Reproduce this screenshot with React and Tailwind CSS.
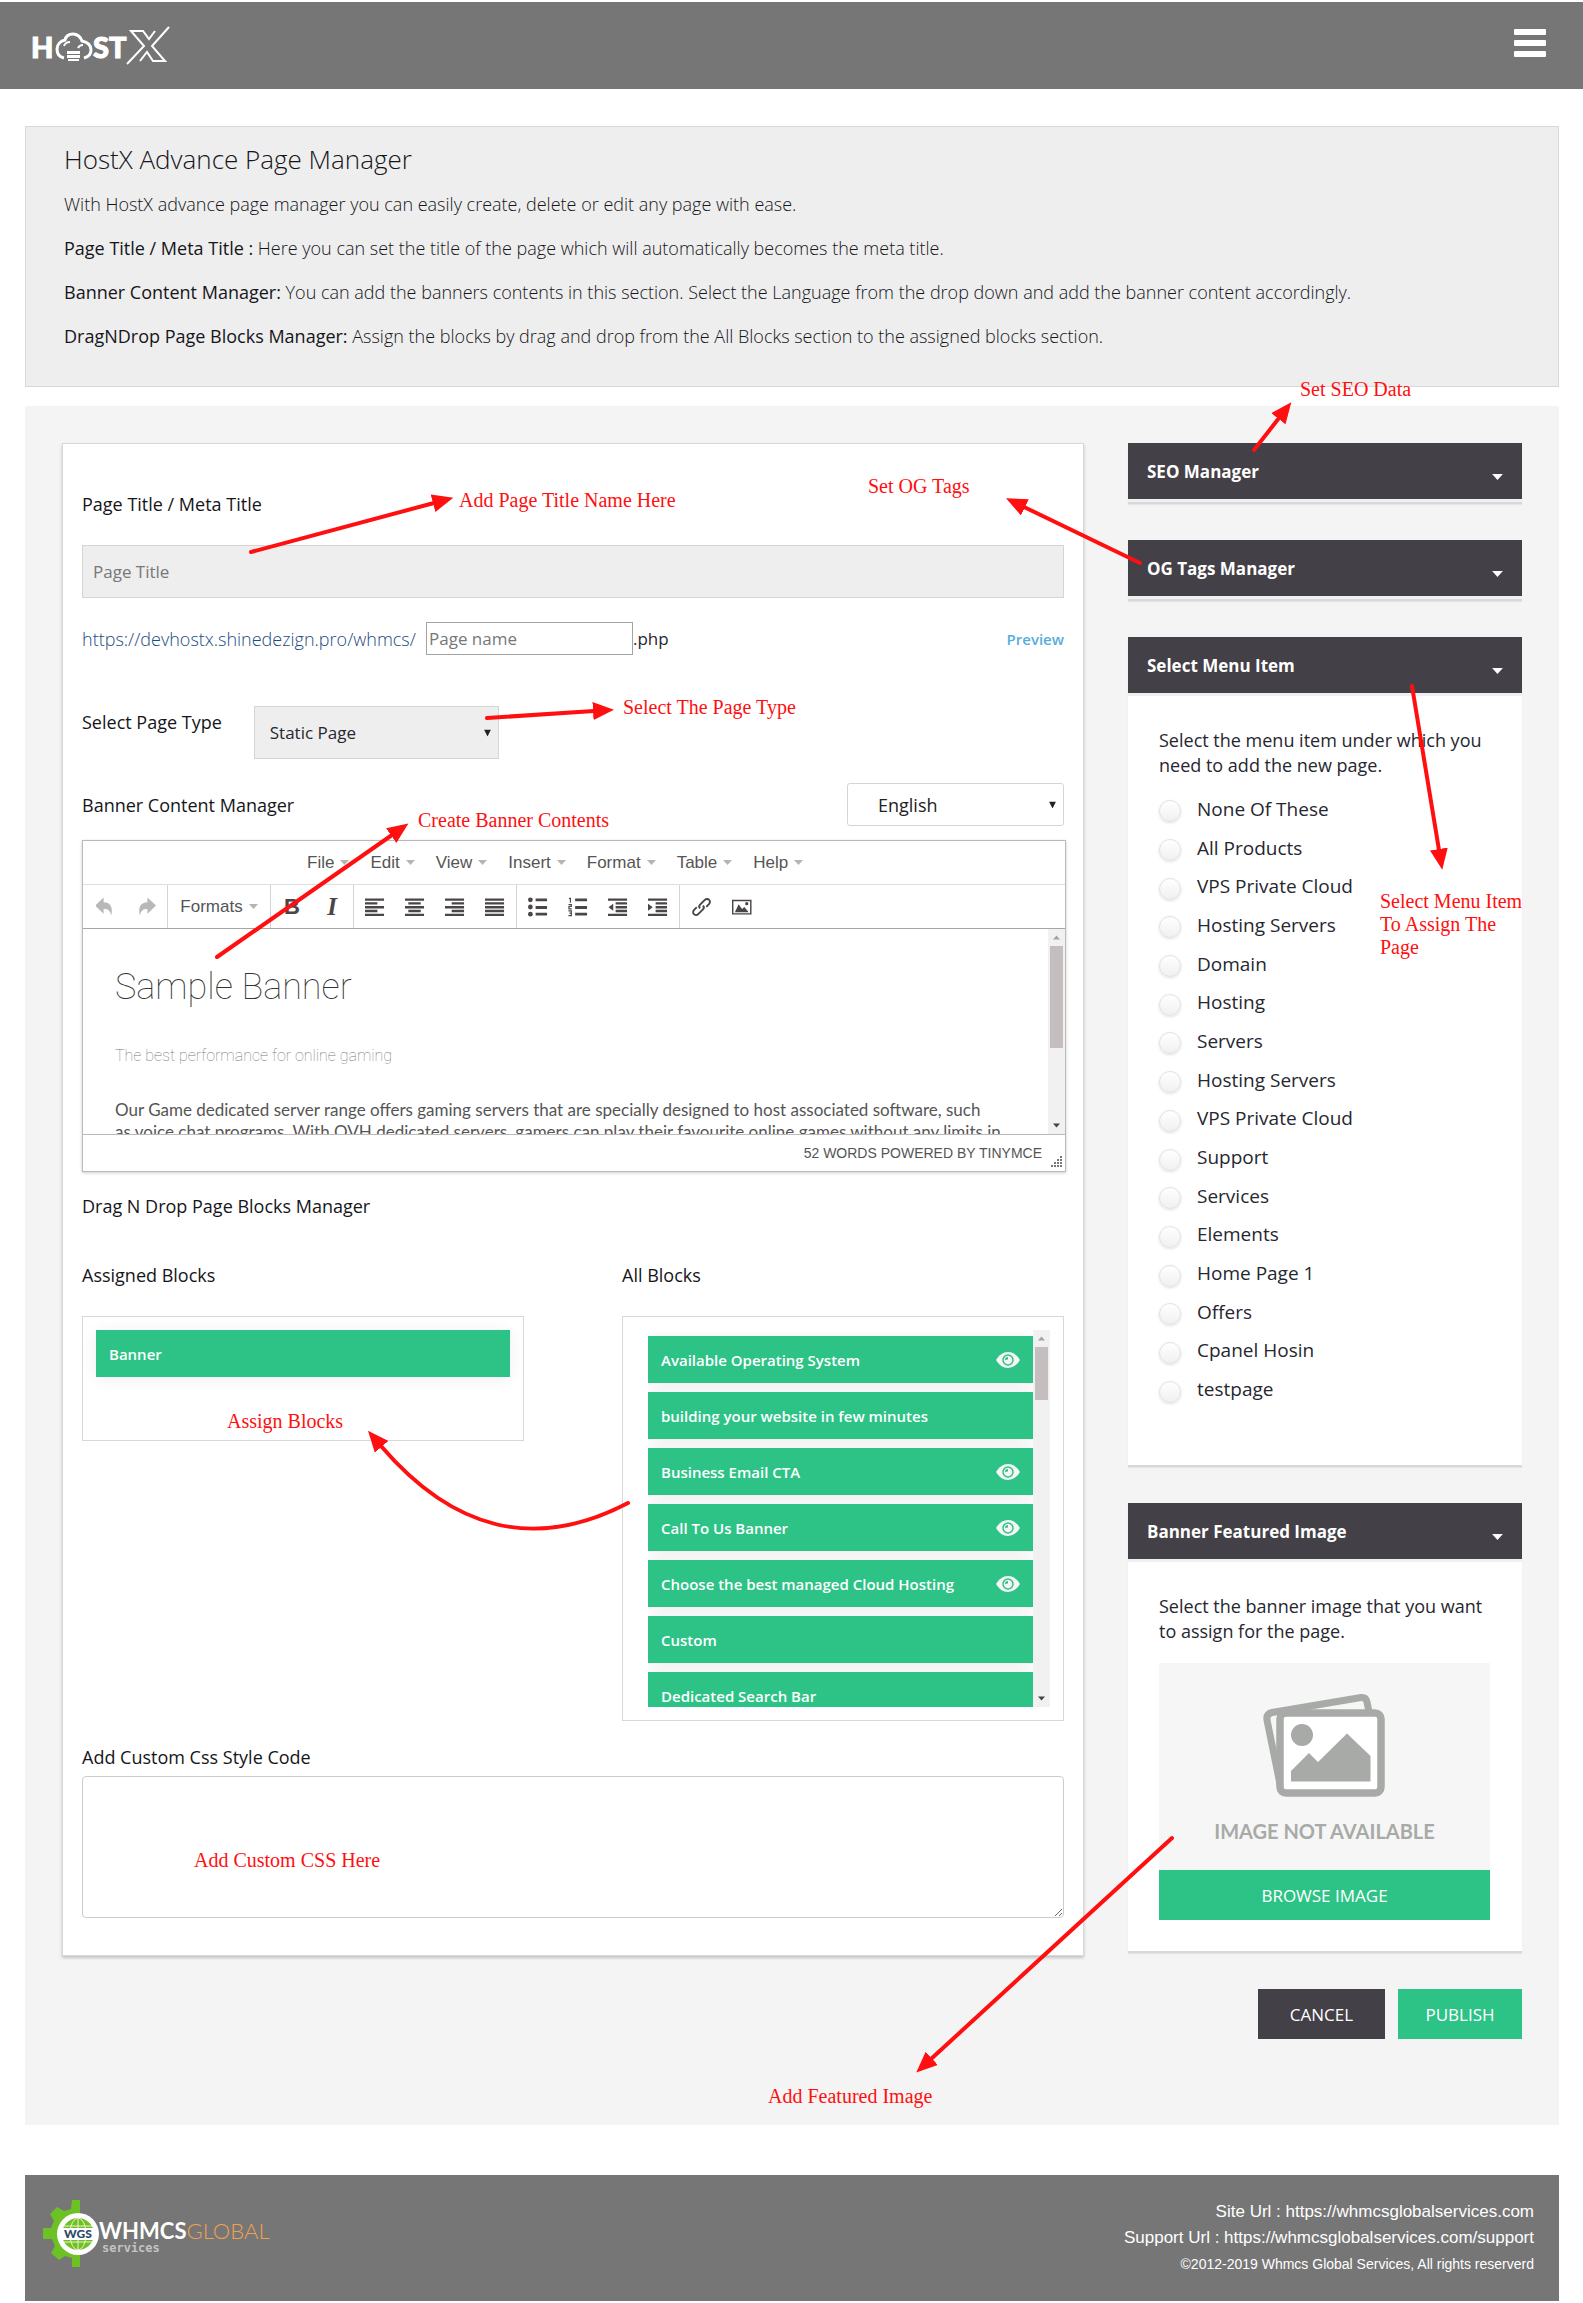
import { useState } from 'react'

const menuItems = [
  'None Of These', 'All Products', 'VPS Private Cloud', 'Hosting Servers',
  'Domain', 'Hosting', 'Servers', 'Hosting Servers', 'VPS Private Cloud',
  'Support', 'Services', 'Elements', 'Home Page 1', 'Offers', 'Cpanel Hosin', 'testpage',
]

const allBlocks = [
  { name: 'Available Operating System', preview: true },
  { name: 'building your website in few minutes', preview: false },
  { name: 'Business Email CTA', preview: true },
  { name: 'Call To Us Banner', preview: true },
  { name: 'Choose the best managed Cloud Hosting', preview: true },
  { name: 'Custom', preview: false },
  { name: 'Dedicated Search Bar', preview: false },
]

const editorMenus = ['File', 'Edit', 'View', 'Insert', 'Format', 'Table', 'Help']

function HostXLogo() {
  return (
    <svg width="140" height="40" viewBox="32 26 140 40" fill="none" role="img" aria-label="HostX">
      <g fill="#fff" stroke="#fff" strokeWidth="1" fontFamily="Lato, sans-serif" fontWeight="900" fontSize="29">
        <text x="31" y="58">H</text>
        <text x="93" y="58">ST</text>
      </g>
      <path d="M64 58C59 57 57 53 57 49c0-5 4-8 8-9 1-4 4-6 8-6s8 3 9 7c5 1 9 4 9 9 0 4-3 7-7 8" stroke="#fff" strokeWidth="3" />
      <path d="M64 46c1-3 3-4 6-4M78 48c1-2 3-3 5-3" stroke="#fff" strokeWidth="2" />
      <path d="M67 51h13v3H67zM67 55h13v3H67zM68 59h11v2H68z" fill="#fff" />
      <path d="M169 27 152 46 165 61h-12l-6-9-7 9M127 64l17-18-13-15h12l6 8 6-8" stroke="#fff" strokeWidth="2" />
    </svg>
  )
}

function GearLogo() {
  return (
    <svg width="56" height="70" viewBox="0 0 56 70" aria-hidden="true">
      <path
        fill="#6cc224"
        d="M29 1h8v67h-8v-9l-7-2-6 4-8-7 4-7-3-7H0V29h8l3-7-4-7 7-7 7 4 7-2z"
      />
      <circle cx="35" cy="35" r="21" fill="#fff" />
      <circle cx="35" cy="35" r="16" fill="#6cc224" />
      <g fill="none" stroke="#f5efcf" strokeWidth="1">
        <path d="M35 19v32M21 27h28M21 43h28" />
        <ellipse cx="35" cy="35" rx="8" ry="16" />
      </g>
      <path d="M18 29h34v12H18z" fill="#fff" />
      <text x="35" y="39" textAnchor="middle" fontFamily="Lato, sans-serif" fontWeight="900" fontSize="12" fill="#2b4a66">WGS</text>
    </svg>
  )
}

function Caret({ className }) {
  return (
    <svg width="9" height="5" viewBox="0 0 9 5" className={className} fill="currentColor" aria-hidden="true">
      <path d="M0 0h9L4.500 5z" />
    </svg>
  )
}

function SelectArrow() {
  return (
    <svg width="7" height="7" viewBox="0 0 7 7" fill="#222" className="pointer-events-none absolute top-1/2 right-2 -translate-y-1/2" aria-hidden="true">
      <path d="M0 0h7L3.500 7z" />
    </svg>
  )
}

function Eye() {
  return (
    <svg width="24" height="16" viewBox="0 0 24 16" aria-hidden="true">
      <path d="M0 8C3 3 7 0 12 0s9 3 12 8c-3 5-7 8-12 8S3 13 0 8z" fill="#f4f6f3" />
      <circle cx="12" cy="8" r="5" fill="none" stroke="#2dc387" strokeWidth="1.500" />
      <path d="M9 8a3 3 0 0 1 3-3v2.500z" fill="#2dc387" />
    </svg>
  )
}

// editor toolbar glyphs, all drawn on a 20x20 grid
const glyphs = {
  left: <path d="M0 1h20v2.500H0zM0 5h13v2.500H0zM0 9h20v2.500H0zM0 13h13v2.500H0zM0 17h20v2.500H0z" />,
  center: <path d="M0 1h20v2.500H0zM3.500 5h13v2.500h-13zM0 9h20v2.500H0zM3.500 13h13v2.500h-13zM0 17h20v2.500H0z" />,
  right: <path d="M0 1h20v2.500H0zM7 5h13v2.500H7zM0 9h20v2.500H0zM7 13h13v2.500H7zM0 17h20v2.500H0z" />,
  justify: <path d="M0 1h20v2.500H0zM0 5h20v2.500H0zM0 9h20v2.500H0zM0 13h20v2.500H0zM0 17h20v2.500H0z" />,
  bullets: (
    <>
      <circle cx="2.500" cy="2.500" r="2.500" /><circle cx="2.500" cy="10" r="2.500" /><circle cx="2.500" cy="17.500" r="2.500" />
      <path d="M8 1h12v3H8zM8 9h12v3H8zM8 16h12v3H8z" />
    </>
  ),
  numbers: (
    <>
      <path d="M7.500 1H20v3H7.500zM7.500 9H20v3H7.500zM7.500 16H20v3H7.500z" />
      <path d="M1 1h1.500v4.500M.5 7.500h3v2h-2.500v2.500h3M.5 14h3v2.500h-2 2V19h-3" fill="none" stroke="currentColor" strokeWidth="1.200" />
    </>
  ),
  outdent: <path d="M0 1h20v2.500H0zM8 5h12v2.500H8zM8 9h12v2.500H8zM8 13h12v2.500H8zM0 17h20v2.500H0zM5.500 6.500v7.500L.5 10.200z" />,
  indent: <path d="M0 1h20v2.500H0zM8 5h12v2.500H8zM8 9h12v2.500H8zM8 13h12v2.500H8zM0 17h20v2.500H0zM0 6.500v7.500l5-3.800z" />,
  link: (
    <g fill="none" stroke="currentColor" strokeWidth="2">
      <path d="M8.500 11.500c-1.500-1.500-1-3 0-4l5-5c1.500-1.500 3.500-1 4.500 0s1.200 3 0 4.300l-3 3" />
      <path d="M11.500 8.500c1.500 1.500 1 3 0 4l-5 5c-1.500 1.500-3.500 1-4.500 0s-1.200-3 0-4.300l3-3" />
    </g>
  ),
  image: (
    <>
      <path d="M0 2.500h20.500v15.500H0zM1.500 4v12.500H19V4z" fillRule="evenodd" />
      <path d="M3 15.500 7 7l3.500 5 2.500-2 4.500 5.500z" /><circle cx="15.500" cy="6.500" r="1.700" />
    </>
  ),
  undo: <path d="M8 0v5c7 0 10 5 8 14-1-5-3-7-8-7v5L-1 8.500z" />,
  redo: <path d="M12 0v5c-7 0-10 5-8 14 1-5 3-7 8-7v5l9-8.500z" />,
}

function ToolButton({ name, label, faded }) {
  return (
    <button type="button" aria-label={label} className={faded ? 'flex w-10 items-center justify-center text-[#b9b7b7]' : 'flex w-10 items-center justify-center text-[#4a4546]'}>
      <svg width="20" height="20" viewBox="0 0 21 20" fill="currentColor">{glyphs[name]}</svg>
    </button>
  )
}

function ScrollBar({ thumb }) {
  return (
    <div className="flex w-[17px] shrink-0 flex-col items-center bg-[#f1f1f1]" aria-hidden="true">
      <div className="flex h-[17px] items-center">
        <Caret className="w-[7px] rotate-180 text-[#a3a3a3]" />
      </div>
      <div className={thumb} />
      <div className="mt-auto flex h-[17px] items-center">
        <Caret className="w-[7px] text-[#444]" />
      </div>
    </div>
  )
}

function Block({ name, preview }) {
  return (
    <li className="flex h-[47px] shrink-0 items-center justify-between bg-[#2dc387] px-[13px] text-[15px] font-semibold text-white shadow-[0_2px_15px_rgba(0,0,0,0.07)]">
      {name}
      {preview && <button type="button" aria-label={`Preview ${name}`}><Eye /></button>}
    </li>
  )
}

function Panel({ title, children }) {
  return (
    <section className="border-b-2 border-[#d8d8d8] shadow-[0_1px_1px_rgba(0,0,0,0.06)]">
      <button type="button" className="flex h-14 w-full items-center justify-between bg-[#434047] px-[19px] text-left text-[17px] font-bold text-white">
        {title}
        <Caret className="mt-3 h-[6px] w-[11px]" />
      </button>
      <div className="h-[3px] bg-[#f0f0f0]" />
      {children && <div className="bg-white pt-8 pr-8 pl-[31px]">{children}</div>}
    </section>
  )
}

const notes = [
  { text: 'Set SEO Data', box: 'left-[1300px] top-[378px]', arrow: 'M1254 450 1279 418' },
  { text: 'Set OG Tags', box: 'left-[868px] top-[475px]', arrow: 'M1140 563 1024 507' },
  { text: 'Add Page Title Name Here', box: 'left-[459px] top-[489px]', arrow: 'M251 552 434 503' },
  { text: 'Select The Page Type', box: 'left-[623px] top-[696px]', arrow: 'M487 718 594 711' },
  { text: 'Create Banner Contents', box: 'left-[418px] top-[809px]', arrow: 'M217 957 392 835' },
  { text: 'Select Menu Item To Assign The Page', box: 'left-[1380px] top-[890px] w-[150px]', arrow: 'M1412 686 1439 850' },
  { text: 'Assign Blocks', box: 'left-[227px] top-[1410px]', arrow: 'M628 1503C534 1552 453 1530 381 1446' },
  { text: 'Add Custom CSS Here', box: 'left-[194px] top-[1849px]' },
  { text: 'Add Featured Image', box: 'left-[768px] top-[2085px]', arrow: 'M1172 1838 931 2059' },
]

function Notes() {
  return (
    <div className="pointer-events-none absolute inset-0 font-['Liberation_Serif',serif] text-[20px] leading-[23px] text-[#ff0f0f]">
      <svg className="absolute inset-0 h-full w-full" fill="none" stroke="#ff0f0f" strokeWidth="4" strokeLinecap="round">
        <defs>
          <marker id="head" markerUnits="userSpaceOnUse" markerWidth="22" markerHeight="18" refX="1" refY="9" orient="auto">
            <path d="M0 0 21 9 0 18z" fill="#ff0f0f" stroke="none" />
          </marker>
        </defs>
        {notes.filter((n) => n.arrow).map((n) => (
          <path key={n.text} d={n.arrow} markerEnd="url(#head)" />
        ))}
      </svg>
      {notes.map((n) => (
        <p key={n.text} className={`absolute ${n.box}`}>{n.text}</p>
      ))}
    </div>
  )
}

function Editor() {
  return (
    <div className="-mr-[2px] mt-[14px] border border-[#bdb9b9] font-['Liberation_Sans',sans-serif] text-[#555] shadow-[0_1px_3px_rgba(0,0,0,0.2)]">
      <div className="flex h-11 items-center gap-[21px] border-b border-[#d8e0e2] pl-[224px] text-[17px]">
        {editorMenus.map((m) => (
          <button key={m} type="button" className="flex items-center gap-[6px]">
            {m}
            <Caret className="text-[#b5b5b5]" />
          </button>
        ))}
      </div>
      <div className="flex h-11 border-b border-[#a8a5a5]">
        <div className="flex border-r border-[#d4d4d4] pr-px pl-[3px]">
          <ToolButton name="undo" label="Undo" faded />
          <ToolButton name="redo" label="Redo" faded />
        </div>
        <button type="button" className="flex w-[103px] items-center justify-center gap-[6px] border-r border-[#d4d4d4] text-[17px]">
          Formats
          <Caret className="text-[#b5b5b5]" />
        </button>
        <div className="flex border-r border-[#d4d4d4] px-px font-['Liberation_Serif',serif] text-[25px] font-bold text-[#4a4546]">
          <button type="button" className="w-10 font-['Liberation_Sans',sans-serif] text-[22px]" aria-label="Bold">B</button>
          <button type="button" className="w-10 italic" aria-label="Italic">I</button>
        </div>
        <div className="flex border-r border-[#d4d4d4] px-px">
          <ToolButton name="left" label="Align left" />
          <ToolButton name="center" label="Align center" />
          <ToolButton name="right" label="Align right" />
          <ToolButton name="justify" label="Justify" />
        </div>
        <div className="flex border-r border-[#d4d4d4] px-px">
          <ToolButton name="bullets" label="Bullet list" />
          <ToolButton name="numbers" label="Numbered list" />
          <ToolButton name="outdent" label="Decrease indent" />
          <ToolButton name="indent" label="Increase indent" />
        </div>
        <div className="flex px-[2px]">
          <ToolButton name="link" label="Insert link" />
          <ToolButton name="image" label="Insert image" />
        </div>
      </div>
      <div className="flex h-[205px]">
        <div className="flex-1 overflow-hidden pt-[34px] pl-8">
          <h2 className="font-['Roboto',sans-serif] text-[36px] leading-[48px] font-thin text-[#333]">Sample Banner</h2>
          <h3 className="mt-[33px] font-['Roboto',sans-serif] text-base leading-6 font-thin text-[#777]">The best performance for online gaming</h3>
          <p className="mt-[31px] font-['Lato',sans-serif] text-[17px] leading-[22px] whitespace-nowrap text-[#555]">
            Our Game dedicated server range offers gaming servers that are specially designed to host associated software, such
            <br />
            as voice chat programs. With OVH dedicated servers, gamers can play their favourite online games without any limits in
          </p>
        </div>
        <ScrollBar thumb="h-[102px] w-[13px] bg-[#c4bfbe]" />
      </div>
      <div className="flex h-[37px] items-center justify-end gap-2 border-t border-[#bdb9b9] text-sm">
        52 WORDS POWERED BY TINYMCE
        <svg width="12" height="12" viewBox="0 0 12 12" fill="#777" className="mt-auto mr-[3px] mb-[3px]" aria-hidden="true">
          <path d="M10 0h2v2h-2zM10 3h2v2h-2zM7 3h2v2H7zM10 6h2v2h-2zM7 6h2v2H7zM4 6h2v2H4zM10 9h2v2h-2zM7 9h2v2H7zM4 9h2v2H4zM1 9h2v2H1z" />
        </svg>
      </div>
    </div>
  )
}

export default function App() {
  const [selected, setSelected] = useState(null)

  return (
    <div className="relative bg-white pt-[2px] pb-[2px] font-['Open_Sans',sans-serif] text-[#26272f]">
      {/* Header */}
      <header className="flex h-[87px] items-start justify-between bg-[#767676] pl-8 pr-[37px]">
        <a href="#home" className="pt-6"><HostXLogo /></a>
        <button type="button" aria-label="Open menu" className="mt-[27px] flex flex-col gap-[5px]">
          <span className="h-[6px] w-8 rounded-[1px] bg-white" />
          <span className="h-[6px] w-8 rounded-[1px] bg-white" />
          <span className="h-[6px] w-8 rounded-[1px] bg-white" />
        </button>
      </header>

      <main className="pt-[37px] pr-6 pl-[25px]">
        {/* Intro */}
        <section className="space-y-5 border border-[#d8d8d8] bg-[#eee] px-[38px] pt-[19px] pb-[38px] text-[18px] leading-6 font-light text-[#15151a]">
          <h1 className="text-[26px] leading-[26px]">HostX Advance Page Manager</h1>
          <p>With HostX advance page manager you can easily create, delete or edit any page with ease.</p>
          <p><b className="font-medium">Page Title / Meta Title :</b> Here you can set the title of the page which will automatically becomes the meta title.</p>
          <p><b className="font-medium">Banner Content Manager:</b> You can add the banners contents in this section. Select the Language from the drop down and add the banner content accordingly.</p>
          <p><b className="font-medium">DragNDrop Page Blocks Manager:</b> Assign the blocks by drag and drop from the All Blocks section to the assigned blocks section.</p>
        </section>

        <div className="mt-[19px] grid grid-cols-[minmax(0,1fr)_394px] items-start gap-11 bg-[#f4f4f4] px-[37px] pt-[37px] pb-[86px]">
          {/* Page form */}
          <form className="border border-[#d8d8d8] bg-white px-[19px] pt-12 pb-[37px] text-[18px] leading-6 shadow-[0_2px_3px_rgba(0,0,0,0.2)]">
            <label htmlFor="title" className="block font-medium text-[#15151a]">Page Title / Meta Title</label>
            <input id="title" placeholder="Page Title" className="mt-[29px] block h-[53px] w-full border border-[#d5d5d5] bg-[#eee] px-[10px] text-[17px] placeholder:text-[#777]" />

            <div className="mt-6 flex h-[33px] items-center text-[17px]">
              <label htmlFor="slug" className="w-[344px] text-[18px] font-light whitespace-nowrap text-[#1d4a80]">https://devhostx.shinedezign.pro/whmcs/</label>
              <input id="slug" placeholder="Page name" className="h-[33px] w-[207px] border border-[#a3a3a3] px-[2px] placeholder:text-[#777]" />
              <span>.php</span>
              <a href="#preview" className="ml-auto text-[15px] font-semibold text-[#58addd]">Preview</a>
            </div>

            <div className="mt-[51px] flex items-start gap-8">
              <label htmlFor="type" className="mt-1 font-medium text-[#15151a]">Select Page Type</label>
              <div className="relative">
                <select id="type" className="h-[53px] w-[245px] appearance-none border border-[#d5d5d5] bg-[#eee] px-[15px] text-[17px]">
                  <option>Static Page</option>
                </select>
                <SelectArrow />
              </div>
            </div>

            <div className="mt-6 flex items-center justify-between">
              <h2 className="font-medium text-[#15151a]">Banner Content Manager</h2>
              <div className="relative">
                <select aria-label="Language" className="h-[43px] w-[217px] appearance-none rounded-[3px] border border-[#d5d5d5] bg-white px-[30px] font-medium text-[#222]">
                  <option>English</option>
                </select>
                <SelectArrow />
              </div>
            </div>

            <Editor />

            <h2 className="mt-[22px] font-medium text-[#15151a]">Drag N Drop Page Blocks Manager</h2>
            <div className="mt-[45px] grid grid-cols-2 items-start gap-[98px]">
              <div>
                <h3 className="font-medium text-[#15151a]">Assigned Blocks</h3>
                <ul className="mt-[29px] h-[125px] border border-[#d8d8d8] p-[13px]">
                  <Block name="Banner" />
                </ul>
              </div>
              <div>
                <h3 className="font-medium text-[#15151a]">All Blocks</h3>
                <div className="mt-[29px] flex h-[405px] border border-[#d8d8d8] py-[13px] pr-[13px] pl-[25px]">
                  <ul className="flex flex-1 flex-col gap-[9px] overflow-hidden pt-[6px]">
                    {allBlocks.map((b) => (
                      <Block key={b.name} name={b.name} preview={b.preview} />
                    ))}
                  </ul>
                  <ScrollBar thumb="h-[53px] w-[13px] bg-[#c4bfbe]" />
                </div>
              </div>
            </div>

            <label htmlFor="css" className="mt-6 block font-medium text-[#15151a]">Add Custom Css Style Code</label>
            <textarea id="css" className="mt-[7px] block h-[142px] w-full rounded-[4px] border border-[#ccc]" />
          </form>

          {/* Sidebar */}
          <aside className="flex flex-col gap-9 text-[18px] leading-[25px]">
            <Panel title="SEO Manager" />
            <Panel title="OG Tags Manager" />
            <Panel title="Select Menu Item">
              <p className="font-medium">Select the menu item under which you need to add the new page.</p>
              <div className="mt-3 grid h-[675px] auto-rows-fr pb-[56px] text-[19px] font-medium">
                {menuItems.map((item, i) => (
                  <label key={i} className="flex items-center gap-4">
                    <input
                      type="radio"
                      name="menu"
                      checked={selected === i}
                      onChange={() => setSelected(i)}
                      className="mt-1 size-[22px] appearance-none rounded-full border border-[#e2e2e2] bg-linear-to-b from-white to-[#f0f0f0] shadow-[0_1px_3px_rgba(0,0,0,0.12)] checked:border-[6px] checked:border-[#2dc387]"
                    />
                    {item}
                  </label>
                ))}
              </div>
            </Panel>
            <Panel title="Banner Featured Image">
              <p className="font-medium">Select the banner image that you want to assign for the page.</p>
              <div className="mt-[19px] flex h-[207px] flex-col items-center bg-[#f6f6f6] pt-[30px] text-[#a8aaa8]">
                <svg width="124" height="105" viewBox="0 0 124 105" aria-hidden="true">
                  <path d="M18 96 4 27Q3 21 9 19.500L98 4.500q5-.5 6 4.500l2 10" fill="none" stroke="currentColor" strokeWidth="7" />
                  <rect x="17" y="20" width="101" height="80" rx="6" fill="#fff" stroke="currentColor" strokeWidth="7.500" />
                  <circle cx="39" cy="42" r="11" fill="currentColor" />
                  <path d="M28 88.500V78l18-18 9 9 29-28.500L107.500 63v25.500z" fill="currentColor" />
                </svg>
                <p className="mt-[21px] font-['Lato',sans-serif] text-[20px] font-bold">IMAGE NOT AVAILABLE</p>
              </div>
              <button type="button" className="h-[50px] w-full bg-[#2dc387] text-[17px] text-white">BROWSE IMAGE</button>
              <div className="h-[31px]" />
            </Panel>
            <div className="flex justify-end gap-[13px] text-[17px] text-white">
              <button type="button" className="h-[50px] w-[127px] bg-[#434047]">CANCEL</button>
              <button type="button" className="h-[50px] w-[124px] bg-[#2dc387]">PUBLISH</button>
            </div>
          </aside>
        </div>

        {/* Footer */}
        <footer className="mt-[50px] flex h-[126px] items-start justify-between bg-[#767676] pt-6 pr-[25px] pl-[18px] text-white">
          <div className="flex">
            <GearLogo />
            <div className="pt-[21px] font-['Lato',sans-serif]">
              <p className="text-[22px] leading-[22px] font-bold">WHMCS<span className="font-light text-[#f0a04f]">GLOBAL</span></p>
              <p className="pl-[3px] font-['DejaVu_Sans_Mono',monospace] text-xs leading-3 font-bold text-[#c4c4c4]">services</p>
            </div>
          </div>
          <div className="text-right font-['Liberation_Sans',sans-serif] text-[17px] leading-[26px]">
            <p>Site Url : <a href="https://whmcsglobalservices.com">https://whmcsglobalservices.com</a></p>
            <p>Support Url : <a href="https://whmcsglobalservices.com/support">https://whmcsglobalservices.com/support</a></p>
            <p className="text-sm leading-[26px]">©2012-2019 Whmcs Global Services, All rights reserverd</p>
          </div>
        </footer>
      </main>

      <Notes />
    </div>
  )
}
